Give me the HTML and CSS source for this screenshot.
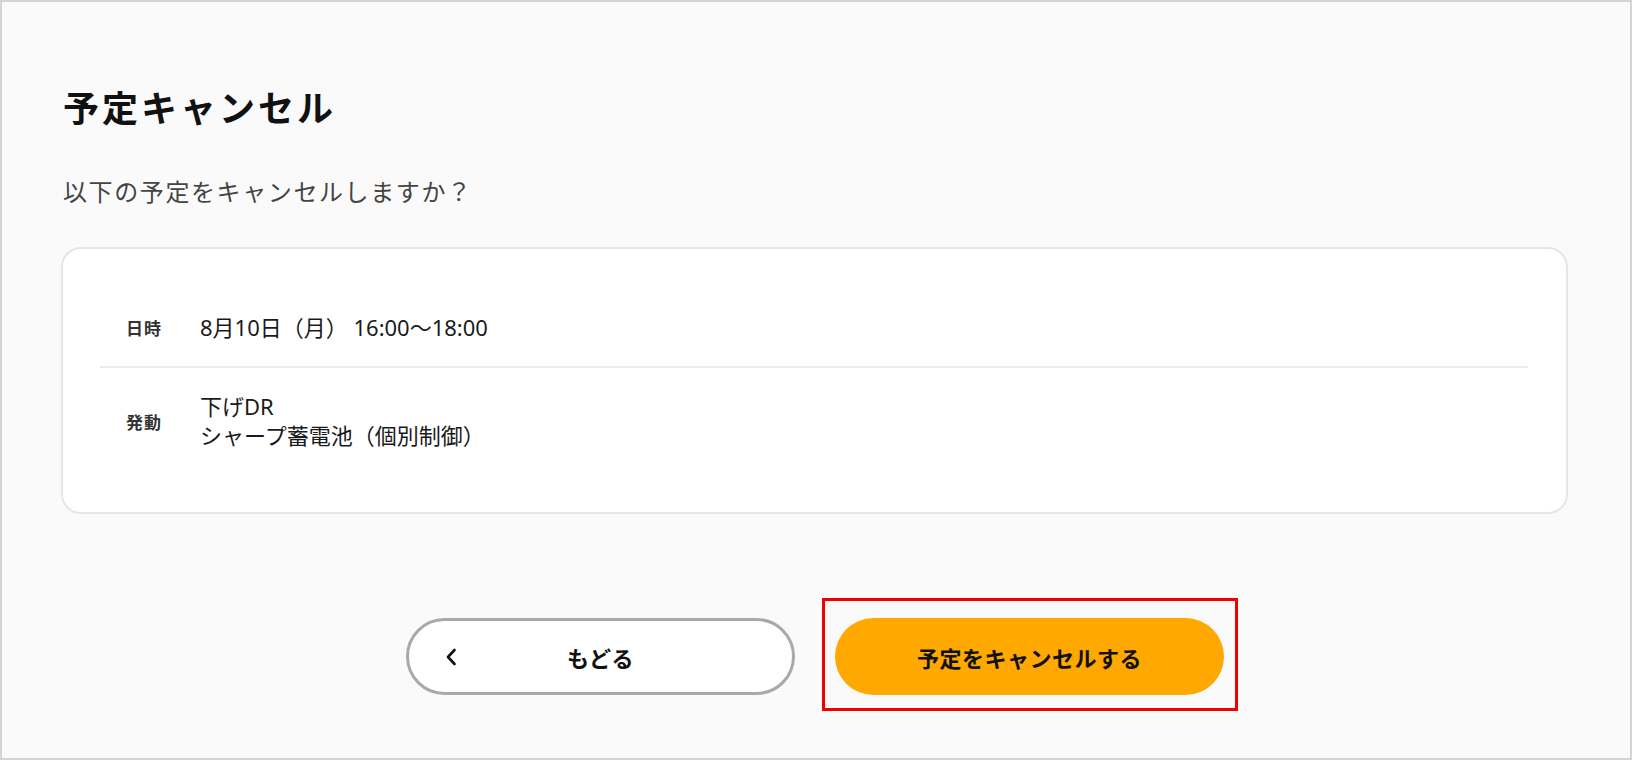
FILE: index.html
```html
<!DOCTYPE html>
<html lang="ja">
<head>
<meta charset="utf-8">
<title>予定キャンセル</title>
<link rel="stylesheet" href="styles.css">
</head>
<body>
<div class="frame">
  <main class="page">
    <h1 class="title">予定キャンセル</h1>
    <p class="lead">以下の予定をキャンセルしますか？</p>
    <section class="card">
      <div class="row">
        <div class="label">日時</div>
        <div class="value">8月10日（月） 16:00～18:00</div>
      </div>
      <div class="row">
        <div class="label">発動</div>
        <div class="value">下げDR<br>シャープ蓄電池（個別制御）</div>
      </div>
    </section>
    <div class="actions">
      <button class="btn btn-back" type="button">
        <svg class="chev" width="12" height="18" viewBox="0 0 12 18" aria-hidden="true"><polyline points="9.5,2 3,9 9.5,16" fill="none" stroke="#111" stroke-width="2.6" stroke-linecap="round" stroke-linejoin="round"/></svg>
        <span class="btn-text">もどる</span>
        <span class="spacer"></span>
      </button>
      <div class="highlight-wrap">
        <button class="btn btn-primary" type="button"><span class="btn-text">予定をキャンセルする</span></button>
        <div class="highlight"></div>
      </div>
    </div>
  </main>
</div>
</body>
</html>
```

FILE: styles.css
```css
* { box-sizing: border-box; }
html, body { margin: 0; padding: 0; }
body {
  width: 1632px;
  height: 760px;
  background: #d6d6d0;
  font-family: "Noto Sans", "Noto Sans CJK JP", sans-serif;
  color: #222;
}
.frame {
  width: 1632px;
  height: 760px;
  border: 2px solid #d6d6d0;
  background: #fafafa;
  overflow: hidden;
}
.page {
  padding: 82px 62px 0 59px;
}
.title {
  margin: 0;
  font-size: 36px;
  line-height: 50px;
  font-weight: 700;
  letter-spacing: 3px;
  color: #111;
  padding-left: 2px;
}
.lead {
  margin: 41px 0 0;
  font-size: 24px;
  line-height: 34px;
  letter-spacing: 1.6px;
  color: #444;
  padding-left: 2px;
}
.card {
  margin-top: 38px;
  background: #fff;
  border: 2px solid #e6e6e6;
  border-radius: 20px;
  padding: 40px 38px 38px 37px;
}
.row {
  display: flex;
  align-items: center;
  padding: 24px 0;
}
.row + .row {
  border-top: 2px solid #ececec;
}
.label {
  width: 100px;
  padding-left: 26px;
  font-size: 17px;
  font-weight: 700;
  color: #333;
  letter-spacing: 1px;
  flex: none;
}
.value {
  font-size: 22px;
  line-height: 29px;
  color: #1a1a1a;
}
.actions {
  display: flex;
  justify-content: center;
  gap: 40px;
  margin-top: 104px;
  padding-left: 1px;
}
.btn {
  width: 389px;
  height: 77px;
  border-radius: 40px;
  font-family: inherit;
  font-size: 22px;
  font-weight: 700;
  color: #111;
  cursor: pointer;
  margin: 0;
}
.btn-back {
  background: #fff;
  border: 3px solid #a9a9a9;
  display: grid;
  grid-template-columns: 1fr auto 1fr;
  align-items: center;
  padding: 0 36px;
}
.chev { justify-self: start; display: block; }
.btn-text { letter-spacing: 0.5px; }
.btn-primary {
  background: #ffa800;
  border: none;
}
.highlight-wrap {
  position: relative;
}
.highlight {
  position: absolute;
  top: -20px;
  bottom: -16px;
  left: -13px;
  right: -14px;
  border: 3px solid #f20000;
  pointer-events: none;
}
```
